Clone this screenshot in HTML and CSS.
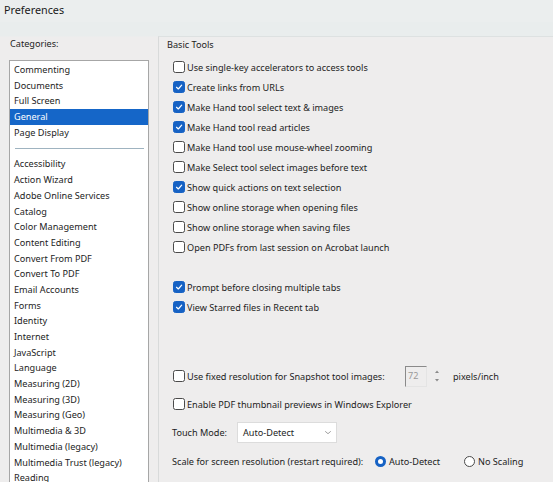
FILE: index.html
```html
<!DOCTYPE html>
<html>
<head>
<meta charset="utf-8">
<link rel="stylesheet" href="styles.css">
</head>
<body>
<div class="window">
  <div class="titlebar">Preferences</div>
  <div class="main">
    <div class="left">
      <div class="cat-label">Categories:</div>
      <div class="list">
        <div class="item">Commenting</div>
        <div class="item">Documents</div>
        <div class="item">Full Screen</div>
        <div class="item selected">General</div>
        <div class="item">Page Display</div>
        <div class="sep"></div>
        <div class="item">Accessibility</div>
        <div class="item">Action Wizard</div>
        <div class="item">Adobe Online Services</div>
        <div class="item">Catalog</div>
        <div class="item">Color Management</div>
        <div class="item">Content Editing</div>
        <div class="item">Convert From PDF</div>
        <div class="item">Convert To PDF</div>
        <div class="item">Email Accounts</div>
        <div class="item">Forms</div>
        <div class="item">Identity</div>
        <div class="item">Internet</div>
        <div class="item">JavaScript</div>
        <div class="item">Language</div>
        <div class="item">Measuring (2D)</div>
        <div class="item">Measuring (3D)</div>
        <div class="item">Measuring (Geo)</div>
        <div class="item">Multimedia &amp; 3D</div>
        <div class="item">Multimedia (legacy)</div>
        <div class="item">Multimedia Trust (legacy)</div>
        <div class="item">Reading</div>
      </div>
    </div>
    <div class="group">
      <div class="group-label">Basic Tools</div>
      <div class="rows">
        <div class="row"><span class="cb"></span><span>Use single-key accelerators to access tools</span></div>
        <div class="row"><span class="cb on"><svg viewBox="0 0 12 12"><polyline points="3,6.3 5.2,8.4 9.2,3.8"/></svg></span><span>Create links from URLs</span></div>
        <div class="row"><span class="cb on"><svg viewBox="0 0 12 12"><polyline points="3,6.3 5.2,8.4 9.2,3.8"/></svg></span><span>Make Hand tool select text &amp; images</span></div>
        <div class="row"><span class="cb on"><svg viewBox="0 0 12 12"><polyline points="3,6.3 5.2,8.4 9.2,3.8"/></svg></span><span>Make Hand tool read articles</span></div>
        <div class="row"><span class="cb"></span><span>Make Hand tool use mouse-wheel zooming</span></div>
        <div class="row"><span class="cb"></span><span>Make Select tool select images before text</span></div>
        <div class="row"><span class="cb on"><svg viewBox="0 0 12 12"><polyline points="3,6.3 5.2,8.4 9.2,3.8"/></svg></span><span>Show quick actions on text selection</span></div>
        <div class="row"><span class="cb"></span><span>Show online storage when opening files</span></div>
        <div class="row"><span class="cb"></span><span>Show online storage when saving files</span></div>
        <div class="row"><span class="cb"></span><span>Open PDFs from last session on Acrobat launch</span></div>
        <div class="row gap"><span class="cb on"><svg viewBox="0 0 12 12"><polyline points="3,6.3 5.2,8.4 9.2,3.8"/></svg></span><span>Prompt before closing multiple tabs</span></div>
        <div class="row"><span class="cb on"><svg viewBox="0 0 12 12"><polyline points="3,6.3 5.2,8.4 9.2,3.8"/></svg></span><span>View Starred files in Recent tab</span></div>
        <div class="row snapshot">
          <span class="cb"></span><span class="snap-text">Use fixed resolution for Snapshot tool images:</span>
          <span class="num">72</span>
          <span class="spin"><svg viewBox="0 0 10 20"><polygon points="3,7 7,7 5,4.5"/><polygon points="3,13 7,13 5,15.5"/></svg></span>
          <span class="unit">pixels/inch</span>
        </div>
        <div class="row enable"><span class="cb"></span><span>Enable PDF thumbnail previews in Windows Explorer</span></div>
        <div class="row touch">
          <span class="touch-label">Touch Mode:</span>
          <span class="select"><span>Auto-Detect</span><svg viewBox="0 0 10 6"><polyline points="1.5,1.5 5,4.5 8.5,1.5"/></svg></span>
        </div>
        <div class="row scale">
          <span class="scale-label">Scale for screen resolution (restart required):</span>
          <span class="radio on"></span><span class="r-text">Auto-Detect</span>
          <span class="radio"></span><span>No Scaling</span>
        </div>
      </div>
    </div>
  </div>
</div>
</body>
</html>
```
FILE: styles.css
```css
* { box-sizing: border-box; }
html, body { margin: 0; padding: 0; }
body {
  width: 553px;
  height: 482px;
  overflow: hidden;
  background: #eeeded;
  font-family: "Noto Sans", "Open Sans", sans-serif;
  font-size: 9.15px;
  color: #1c1c1c;
}
.window { width: 553px; height: 482px; overflow: hidden; }
.titlebar {
  height: 22px;
  padding: 2px 0 0 4px;
  font-size: 10.8px;
  color: #1a1a1a;
  background: #ebeeee;
}
.main {
  display: flex;
  background: linear-gradient(#e9eded 0, #e9eded 14px, #eeeded 15px);
}
.left { width: 158px; padding-left: 9px; flex: none; }
.cat-label { height: 38px; padding: 16px 0 0 1px; line-height: 12px; }
.list {
  width: 140px;
  height: 440px;
  background: #fff;
  border: 1px solid #a6a6a6;
  border-bottom: none;
  padding-top: 1px;
}
.item {
  height: 15.7px;
  line-height: 15.7px;
  padding-left: 4px;
  white-space: nowrap;
}
.item.selected { background: #1566c8; color: #fff; }
.sep {
  height: 1px;
  background: #9fb3c0;
  margin: 7.5px 4px 7.5px 5px;
}
.group {
  flex: 1;
  margin-top: 14px;
  border-left: 1px solid #d8dada;
  border-top: 1px solid #dde1e1;
  padding-left: 8px;
}
.group-label { height: 20px; padding-top: 2px; line-height: 12px; }
.rows { display: flex; flex-direction: column; padding-left: 6px; }
.row {
  display: flex;
  align-items: center;
  height: 20px;
  white-space: nowrap;
}
.cb {
  width: 12px;
  height: 12px;
  flex: none;
  border: 1px solid #4a4a4a;
  border-radius: 2.5px;
  background: #fff;
  margin-right: 2px;
  display: flex;
}
.cb.on { background: #1662c4; border-color: #1662c4; }
.cb svg { width: 10px; height: 10px; }
.cb polyline { fill: none; stroke: #fff; stroke-width: 1.4; stroke-linecap: round; stroke-linejoin: round; }
.row.gap { margin-top: 20px; }
.row.snapshot { margin-top: 48px; height: 22px; }
.snap-text { width: 218px; }
.num {
  width: 22px;
  height: 21px;
  border-top: 1px solid #8a8a8a;
  border-left: 1px solid #8a8a8a;
  border-right: 1px solid #e4e4e4;
  border-bottom: 1px solid #e4e4e4;
  color: #9a9a9a;
  padding: 2px 0 0 2px;
  line-height: 14px;
}
.spin { width: 10px; height: 20px; margin-left: 5px; display: flex; }
.spin svg { width: 10px; height: 20px; }
.spin polygon { fill: #8a8a8a; }
.unit { margin-left: 11px; }
.row.enable { margin-top: 7px; }
.row.touch { margin-top: 8px; height: 21px; }
.touch-label { width: 65px; margin-left: -1px; }
.select {
  width: 100px;
  height: 21px;
  background: #fff;
  border: 1px solid #dcdcdc;
  display: flex;
  align-items: center;
  justify-content: space-between;
  padding: 0 4px 0 5px;
}
.select svg { width: 8px; height: 5px; }
.select polyline { fill: none; stroke: #888; stroke-width: 1; }
.row.scale { margin-top: 8px; }
.scale-label { width: 203px; margin-left: -1px; }
.radio {
  width: 11px;
  height: 11px;
  border-radius: 50%;
  border: 1px solid #4a4a4a;
  background: #fff;
  margin-right: 3px;
  flex: none;
}
.radio.on { border: 3.5px solid #1662c4; }
.r-text { width: 75px; }
```
